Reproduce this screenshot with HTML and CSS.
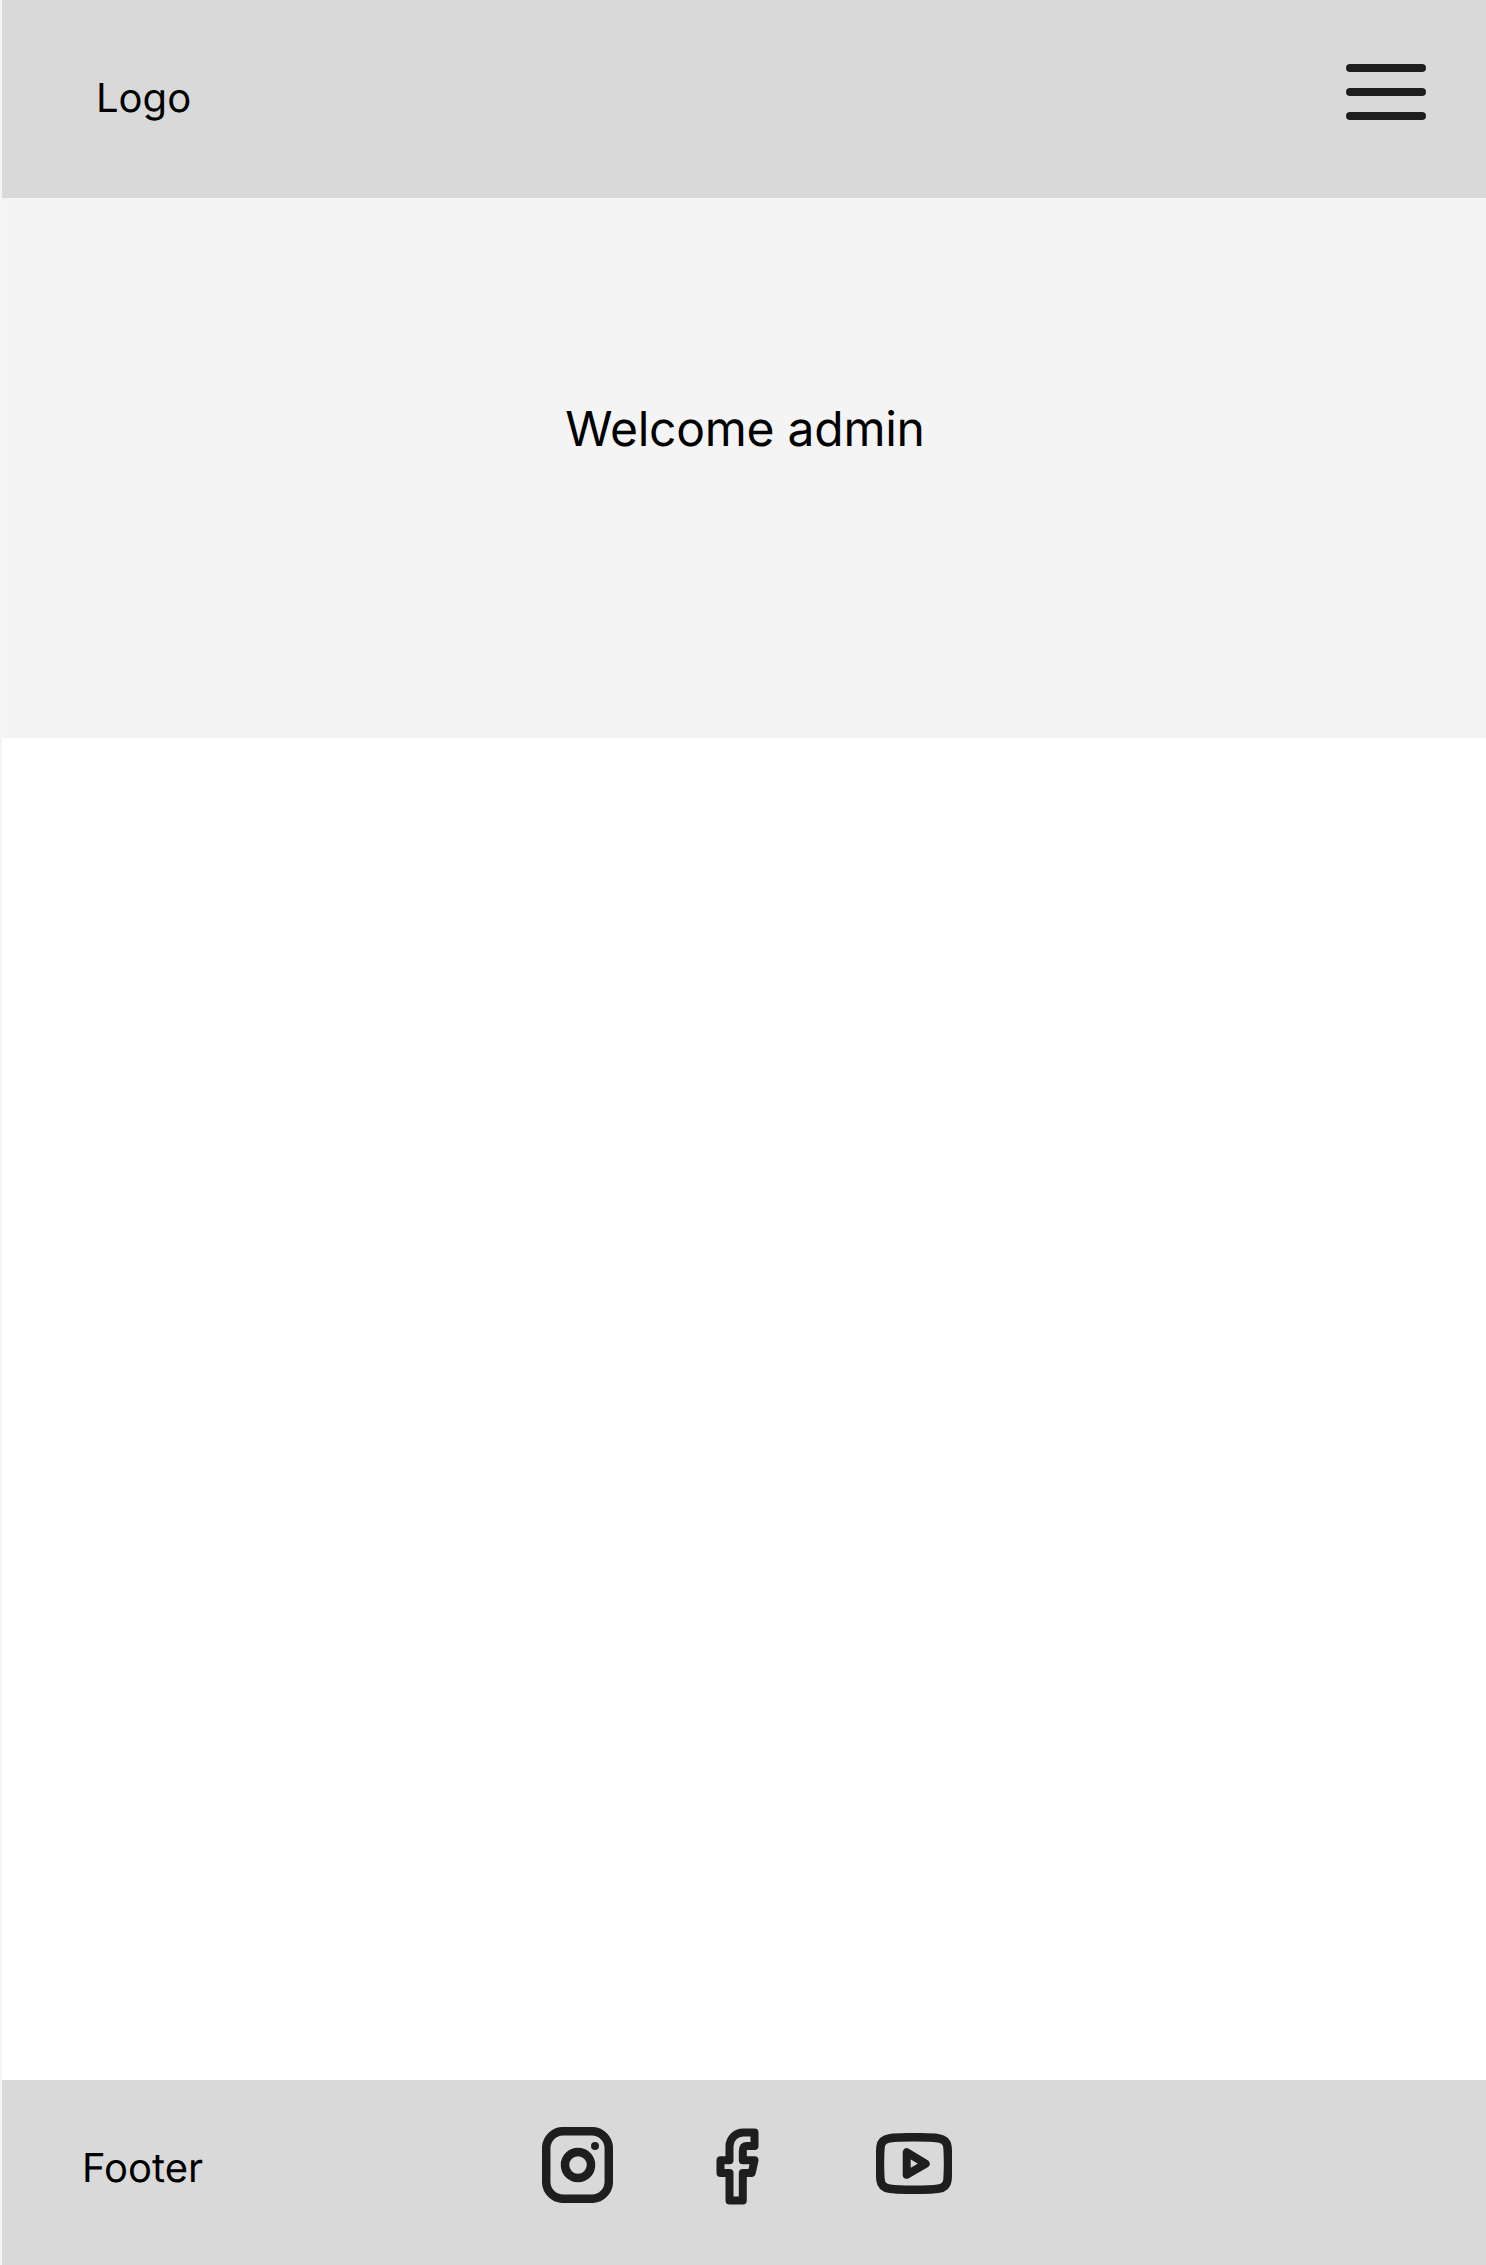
FILE: index.html
```html
<!DOCTYPE html>
<html lang="en">
<head>
  <meta charset="UTF-8" />
  <meta name="viewport" content="width=device-width, initial-scale=1" />
  <title>Welcome admin</title>
  <link rel="stylesheet" href="styles.css">
</head>
<body>
  <header class="topbar">
    <span class="logo">Logo</span>
    <button class="menu-btn" type="button" aria-label="Menu">
      <span></span>
      <span></span>
      <span></span>
    </button>
  </header>

  <section class="hero">
    <h1>Welcome admin</h1>
  </section>

  <main class="content"></main>

  <footer class="footer">
    <span class="footer-text">Footer</span>
    <div class="socials">
      <a href="#" aria-label="Instagram">
        <svg class="icon-instagram" width="71" height="76" viewBox="0 0 71 76" fill="none" stroke="#1e1e1e" stroke-width="8.5">
          <rect x="4.2" y="4.2" width="62.6" height="67.6" rx="17" />
          <circle cx="36" cy="38" r="13" />
          <circle cx="53" cy="19" r="4" fill="#1e1e1e" stroke="none" />
        </svg>
      </a>
      <a href="#" aria-label="Facebook">
        <svg class="icon-facebook" width="43" height="77" viewBox="0 0 43 77" fill="none" stroke="#1e1e1e" stroke-width="8" stroke-linejoin="round">
          <path d="M13.500 72.500V45H4.500V32.300H13.500V18.300C13.500 10 20 4.500 27.300 4.500H38.500V18H31C28 18 26.800 20 26.800 23.300V32.300H38.500L35.700 45H26.800V72.500Z" />
        </svg>
      </a>
      <a href="#" aria-label="YouTube">
        <svg class="icon-youtube" width="76" height="61" viewBox="0 0 76 61" fill="none" stroke="#1e1e1e" stroke-width="8.5" stroke-linejoin="round">
          <path d="M38 4.200C48 4.200 57 4.500 62 5.200C68 6 71 9 71.500 14C72.200 24 72.200 37 71.500 47C71 52 68 55 62 55.800C57 56.500 48 56.800 38 56.800C28 56.800 19 56.500 14 55.800C8 55 5 52 4.500 47C3.800 37 3.800 24 4.500 14C5 9 8 6 14 5.200C19 4.500 28 4.200 38 4.200Z" />
          <path d="M30.700 19.300V41.700L49.700 30.700Z" stroke-width="8" />
        </svg>
      </a>
    </div>
  </footer>
</body>
</html>
```

FILE: styles.css
```css
* {
  box-sizing: border-box;
}
body {
  margin: 0;
  padding-left: 2px;
  min-height: 2265px;
  display: flex;
  flex-direction: column;
  background-color: #f5f5f5;
  font-family: Inter, sans-serif;
  color: #000;
  text-rendering: geometricPrecision;
}
.topbar {
  height: 198px;
  padding: 0 60px 0 94px;
  display: flex;
  align-items: center;
  justify-content: space-between;
  background-color: #d9d9d9;
}
.logo {
  font-size: 40px;
  line-height: 48px;
  margin-bottom: 3px;
}
.menu-btn {
  width: 80px;
  padding: 0;
  border: none;
  background: none;
  display: flex;
  flex-direction: column;
  gap: 16px;
  margin-bottom: 14px;
}
.menu-btn span {
  display: block;
  height: 8px;
  border-radius: 4px;
  background-color: #1e1e1e;
}
.hero {
  height: 540px;
  padding: 202px 0 0 2px;
  background-color: #f4f4f4;
  text-align: center;
}
.hero h1 {
  margin: 0;
  font-size: 48px;
  line-height: 58px;
  font-weight: 400;
  letter-spacing: -0.25px;
}
.content {
  flex: 1;
  background-color: #fff;
}
.footer {
  height: 185px;
  padding-left: 80px;
  display: flex;
  align-items: center;
  background-color: #d9d9d9;
}
.footer-text {
  width: 460px;
  font-size: 40px;
  line-height: 48px;
  margin-bottom: 10px;
}
.socials {
  display: flex;
  align-items: center;
  margin-bottom: 15px;
}
.socials a {
  display: block;
  line-height: 0;
}
.socials a:nth-child(2) {
  margin-left: 103px;
  margin-top: 3px;
}
.socials a:nth-child(3) {
  margin-left: 117px;
  margin-top: -3px;
}
```
